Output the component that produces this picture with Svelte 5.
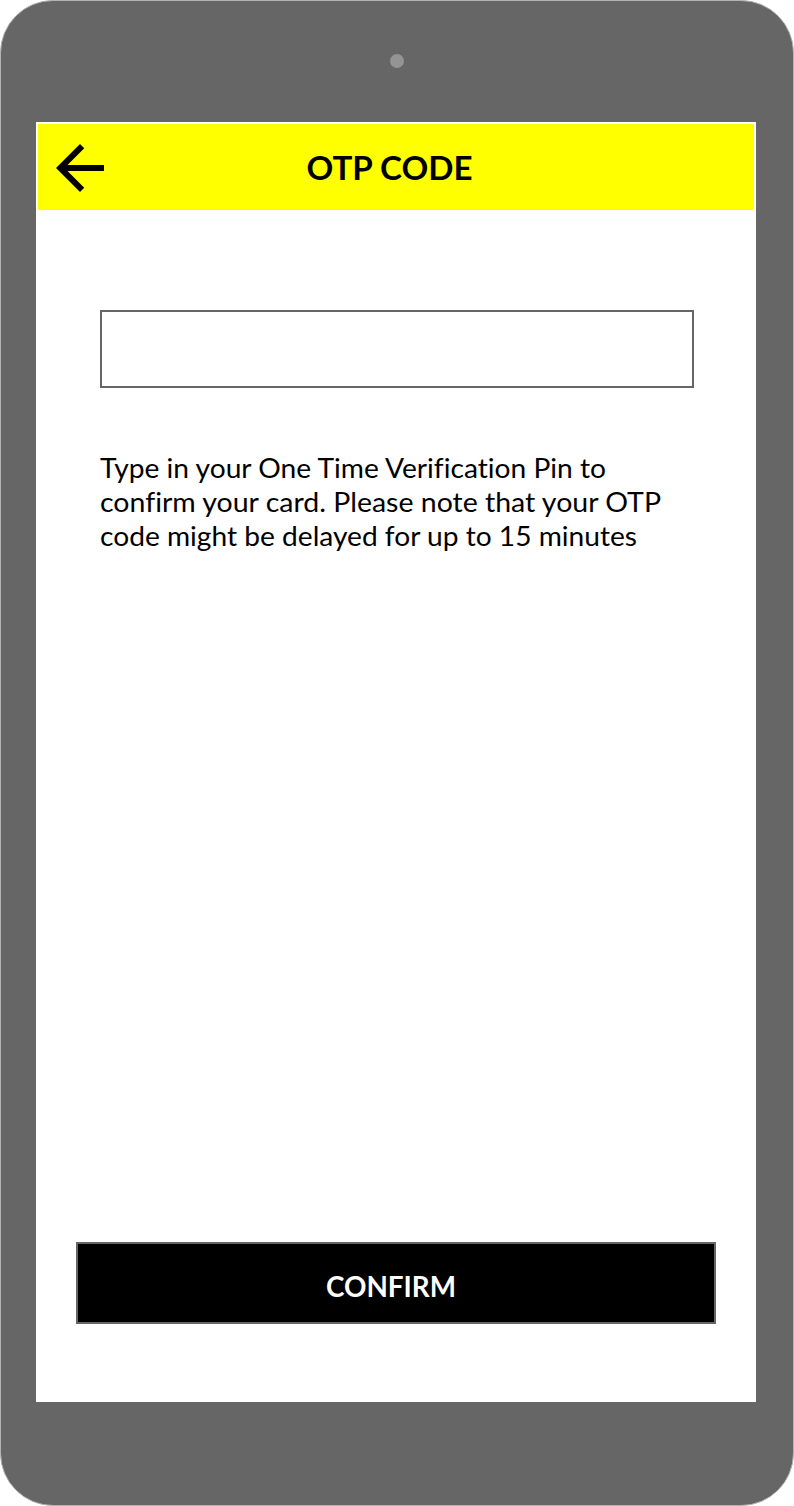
<script>
  const lines = [
    { text: 'Type in your One Time Verification Pin to', width: 506 },
    { text: 'confirm your card. Please note that your OTP', width: 561 },
    { text: 'code might be delayed for up to 15 minutes', width: 537 }
  ];
</script>

<div class="device">
  <div class="top"><span class="camera"></span></div>
  <main class="screen">
    <header>
      <svg class="back" viewBox="0 0 24 24" aria-hidden="true">
        <path d="M20 11H7.83l5.59-5.59L12 4l-8 8 8 8 1.41-1.41L7.83 13H20v-2z" />
      </svg>
      <svg class="title" width="170" height="86">
        <text x="1.5" y="56" textLength="166" lengthAdjust="spacingAndGlyphs">OTP CODE</text>
      </svg>
    </header>
    <div class="field"></div>
    <div class="note">
      {#each lines as line}
        <svg class="line" width="594" height="34">
          <text x="0" y="25.5" textLength={line.width} lengthAdjust="spacingAndGlyphs">{line.text}</text>
        </svg>
      {/each}
    </div>
    <div class="confirm">
      <svg width="134" height="78">
        <text x="1" y="52.5" textLength="130" lengthAdjust="spacingAndGlyphs">CONFIRM</text>
      </svg>
    </div>
  </main>
</div>

<style>
  :global(body) {
    margin: 0;
    background: #fff;
  }
  .device {
    box-sizing: border-box;
    width: 794px;
    height: 1506px;
    padding: 0 35px;
    border: 1px solid #b2b4b3;
    border-radius: 53px;
    background: #666;
    font-family: Lato, 'Open Sans', sans-serif;
    font-variant-ligatures: none;
  }
  .top {
    display: flex;
    justify-content: center;
    height: 121px;
  }
  .camera {
    width: 14px;
    height: 14px;
    margin-top: 53px;
    border-radius: 50%;
    background: #949494;
  }
  .screen {
    display: flex;
    flex-direction: column;
    box-sizing: border-box;
    width: 720px;
    height: 1280px;
    padding: 2px;
    background: #fff;
  }
  header {
    display: flex;
    align-items: center;
    height: 86px;
    flex: none;
    background: #ff0;
  }
  .back {
    width: 72px;
    height: 72px;
    margin: 2px 0 0 6px;
  }
  .title {
    margin-left: 189px;
    font-size: 32px;
    font-weight: 700;
  }
  .field {
    box-sizing: border-box;
    width: 594px;
    height: 78px;
    margin: 100px 0 0 62px;
    border: 2px solid #666;
  }
  .note {
    display: flex;
    flex-direction: column;
    margin: 64px 0 0 62px;
    font-size: 27px;
  }
  .line {
    overflow: visible;
  }
  .confirm {
    display: flex;
    justify-content: center;
    box-sizing: border-box;
    width: 640px;
    height: 82px;
    margin: auto 0 76px 38px;
    border: 2px solid #666;
    background: #000;
    fill: #fff;
    font-size: 28px;
    font-weight: 700;
  }
  .confirm svg {
    margin-right: 9px;
  }
</style>
